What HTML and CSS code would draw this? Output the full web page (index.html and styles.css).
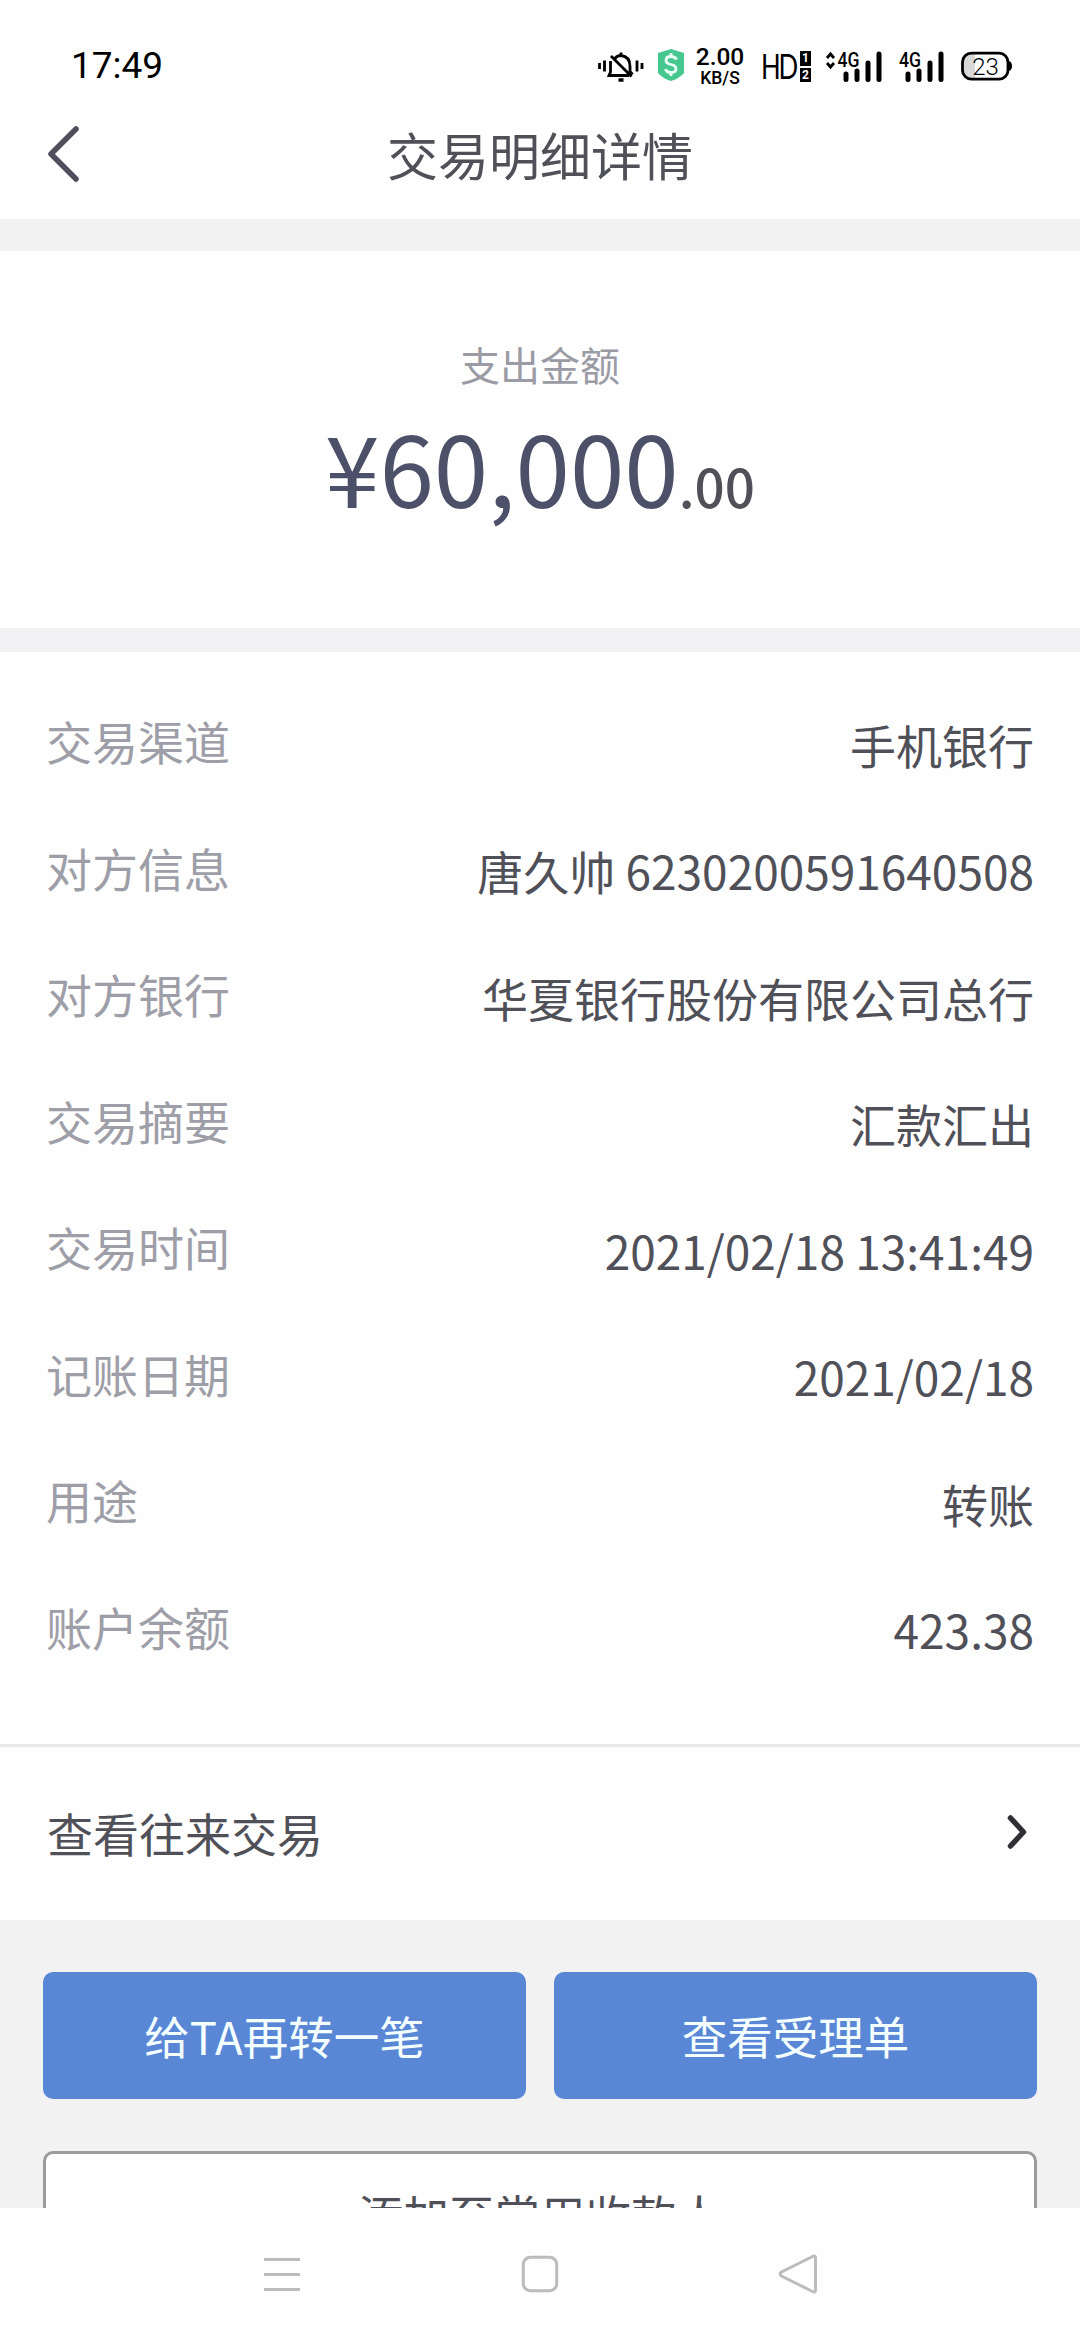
FILE: index.html
```html
<!DOCTYPE html>
<html lang="zh-CN">
<head>
    <meta charset="UTF-8">
    <meta name="viewport" content="width=device-width, initial-scale=1.0">
    <title>交易明细详情</title>
    <link rel="stylesheet" href="styles.css">
</head>
<body>
    <div class="status-bar">
        <span class="time">17:49</span>
        <div class="status-icons">
            <!-- muted bell -->
            <svg class="icon-bell" width="46" height="34" viewBox="0 0 46 34" fill="none" stroke="#000" stroke-width="2.8">
                <path d="M1.500 13v6M6.500 10.500v11M39 10.500v11M44 13v6"/>
                <path d="M17 8.500Q19 5.500 23 5.500q9 1 9 11v5l2.500 3M12.500 11v11l-1.500 3.500h20M23 2.500v3M13 6l20.500 20.500"/>
                <path d="M20.500 30h5" stroke-width="3.500"/>
            </svg>
            <svg class="icon-shield" width="26" height="34" viewBox="0 0 26 34">
                <path d="M13 1l13 4v20q-4 5-13 8Q4 30 0 25V5z" fill="#45c78f"/>
                <path d="M18.500 11.500Q17 8.500 13 8.500q-5 0-5 4 0 3 5 4t5 4.500q0 3.500-5 3.500-4.500 0-5.500-3.500M13 5v4M13 24v4" fill="none" stroke="#eafff5" stroke-width="2.800"/>
            </svg>
            <div class="speed">
                <span class="speed-value">2.00</span>
                <span class="speed-unit">KB/S</span>
            </div>
            <div class="hd">
                <span class="hd-text">HD</span>
                <div class="sims">
                    <span class="sim">1</span>
                    <span class="sim">2</span>
                </div>
            </div>
            <svg class="icon-signal" width="56" height="34" viewBox="0 0 56 34">
                <path d="M1 8l3.500-4L8 8M1 13l3.500 4L8 13" fill="none" stroke="#000" stroke-width="2.800"/>
                <text class="net" x="11.500" y="17" textLength="22" lengthAdjust="spacingAndGlyphs">4G</text>
                <path d="M20 24v5.500M31 21v8.500M42 13v16.500M53 4v25.500" stroke="#000" stroke-width="5" stroke-linecap="round"/>
            </svg>
            <svg class="icon-signal-2" width="45" height="34" viewBox="0 0 45 34">
                <text class="net" x="0" y="17" textLength="22" lengthAdjust="spacingAndGlyphs">4G</text>
                <path d="M9 24v5.500M20 21v8.500M31 13v16.500M42 4v25.500" stroke="#000" stroke-width="5" stroke-linecap="round"/>
            </svg>
            <svg class="icon-battery" width="52" height="34" viewBox="0 0 52 34">
                <path d="M14 3v26h-3q-9 0-9-9v-8q0-9 9-9z" fill="#d9d9d9"/>
                <rect x="1.500" y="3.200" width="45.500" height="26" rx="9" fill="none" stroke="#000" stroke-width="2.800"/>
                <path d="M48 11q3 1 3 5t-3 5z"/>
                <text class="level" x="24.500" y="24.500" text-anchor="middle">23</text>
            </svg>
        </div>
    </div>

    <header class="header">
        <svg class="back" width="36" height="60" viewBox="0 0 36 60">
            <path d="M29 5L4 30l25 25" fill="none" stroke="#4f4f5c" stroke-width="5.500" stroke-linecap="round" stroke-linejoin="round"/>
        </svg>
        <h1 class="title">交易明细详情</h1>
    </header>

    <main class="content">
        <section class="amount">
            <p class="amount-label">支出金额</p>
            <p class="amount-value">¥60,000<span class="cents">.00</span></p>
        </section>

        <section class="details">
            <div class="row"><span class="label">交易渠道</span><span class="value">手机银行</span></div>
            <div class="row"><span class="label">对方信息</span><span class="value">唐久帅 6230200591640508</span></div>
            <div class="row"><span class="label">对方银行</span><span class="value">华夏银行股份有限公司总行</span></div>
            <div class="row"><span class="label">交易摘要</span><span class="value">汇款汇出</span></div>
            <div class="row"><span class="label">交易时间</span><span class="value">2021/02/18 13:41:49</span></div>
            <div class="row"><span class="label">记账日期</span><span class="value">2021/02/18</span></div>
            <div class="row"><span class="label">用途</span><span class="value">转账</span></div>
            <div class="row"><span class="label">账户余额</span><span class="value">423.38</span></div>
        </section>

        <div class="history">
            <span>查看往来交易</span>
            <svg width="22" height="36" viewBox="0 0 22 36">
                <path d="M4.500 4l13 14-13 14" fill="none" stroke="#303034" stroke-width="5.500" stroke-linecap="round" stroke-linejoin="round"/>
            </svg>
        </div>

        <div class="actions">
            <div class="action-pair">
                <button class="btn btn-primary">给TA再转一笔</button>
                <button class="btn btn-primary">查看受理单</button>
            </div>
            <button class="btn btn-outline">添加至常用收款人</button>
        </div>
    </main>

    <nav class="nav-bar">
        <svg width="40" height="40" viewBox="0 0 40 40">
            <path d="M2 5.500h36M2 20.500h36M2 35.500h36"/>
        </svg>
        <svg width="40" height="40" viewBox="0 0 40 40">
            <rect x="3.300" y="3.300" width="33.400" height="33.400" rx="7"/>
        </svg>
        <svg width="40" height="40" viewBox="0 0 40 40">
            <path d="M34.500 2.500Q37.500 1 37.500 4v32q0 3-3 1.500L3.500 22q-3-2 0-4z"/>
        </svg>
    </nav>
</body>
</html>
```
FILE: styles.css
```css
* {
    box-sizing: border-box;
}
body {
    margin: 0;
    width: 1080px;
    height: 2340px;
    display: flex;
    flex-direction: column;
    overflow: hidden;
    background: #fefefe;
    color: #505059;
    font-family: "Noto Sans CJK SC", sans-serif;
    font-size: 46px;
}
p, h1 {
    margin: 0;
    font-weight: 400;
}
svg {
    display: block;
    flex: none;
    overflow: visible;
}

/* status bar */
.status-bar {
    flex: none;
    height: 110px;
    padding: 0 67px 0 71px;
    display: flex;
    align-items: flex-start;
    justify-content: space-between;
    color: #000;
    font-family: Roboto, sans-serif;
}
.time {
    margin-top: 45px;
    font-size: 37px;
    line-height: 42px;
}
.status-icons {
    display: flex;
    margin-top: 50px;
}
.icon-shield {
    margin-left: 14px;
    margin-top: -2px;
}
.speed {
    width: 54px;
    margin-left: 9px;
    margin-top: -4px;
    display: flex;
    flex-direction: column;
    align-items: center;
    font-weight: 500;
}
.speed-value {
    font-size: 24.5px;
    line-height: 22px;
}
.speed-unit {
    font-size: 17.5px;
    line-height: 21px;
}
.hd {
    width: 50px;
    margin-left: 14px;
    display: flex;
    justify-content: space-between;
}
.hd-text {
    margin-top: -3px;
    font-family: Lato, sans-serif;
    font-size: 34px;
    line-height: 38px;
    letter-spacing: -7px;
    transform: scaleX(0.76);
    transform-origin: left;
    width: 36px;
    letter-spacing: -3px;
}
.sims {
    display: flex;
    flex-direction: column;
    gap: 2px;
    margin-top: 1px;
}
.sim {
    width: 11px;
    height: 14.5px;
    background: #000;
    color: #fff;
    font-size: 12px;
    font-weight: 700;
    line-height: 15px;
    text-align: center;
}
.icon-signal {
    margin-left: 15px;
}
.icon-signal-2 {
    margin-left: 17px;
}
.icon-battery {
    margin-left: 17px;
}
.net {
    font-size: 20px;
    font-weight: 500;
}
.level {
    font-size: 24px;
    font-weight: 300;
}

/* title bar */
.header {
    flex: none;
    height: 109px;
    padding: 0 47px;
    display: grid;
    grid-template-columns: 60px 1fr 60px;
    align-items: start;
}
.back {
    margin-top: 14px;
}
.title {
    margin-top: 9px;
    font-family: KaiTi, STKaiti, "Noto Sans CJK SC", sans-serif;
    font-size: 51px;
    line-height: 70px;
    text-align: center;
}

.content {
    flex: 1;
    min-height: 0;
    overflow: hidden;
}
.amount {
    height: 433px;
    padding-top: 85px;
    border-top: 32px solid #f2f2f3;
    border-bottom: 24px solid #f1f1f3;
    text-align: center;
}
.amount-label {
    font-size: 40px;
    line-height: 56px;
    color: #9b9ba5;
}
.amount-value {
    margin-top: 8px;
    font-size: 98px;
    line-height: 130px;
    color: #4c5068;
}
.cents {
    font-size: 53px;
    font-weight: 500;
    color: #505059;
}

.details {
    height: 1095px;
    padding: 25px 46px 0;
    border-bottom: 3px solid #e8e8eb;
}
.row {
    height: 126.5px;
    display: flex;
    align-items: center;
    justify-content: space-between;
}
.label {
    color: #9e9ea8;
}
.value {
    padding-top: 7px;
}

.history {
    height: 173px;
    padding: 0 52px 4px 47px;
    display: flex;
    align-items: center;
    justify-content: space-between;
    font-family: KaiTi, STKaiti, "Noto Sans CJK SC", sans-serif;
}

.actions {
    height: 480px;
    padding: 52px 43px 0;
    background: #f2f2f3;
}
.action-pair {
    display: flex;
    gap: 28px;
}
.btn {
    flex: 1;
    height: 127px;
    padding: 0 0 2px;
    border: none;
    border-radius: 10px;
    font-family: KaiTi, STKaiti, "Noto Sans CJK SC", sans-serif;
    font-size: 45.5px;
}
.btn-primary {
    color: #f4ffff;
    background: #5987d6;
}
.btn-outline {
    display: block;
    width: 100%;
    margin-top: 52px;
    color: #505059;
    background: #fefefe;
    border: 3px solid #9b9b9d;
}

/* system navigation */
.nav-bar {
    flex: none;
    height: 132px;
    padding: 0 262px;
    display: flex;
    align-items: center;
    justify-content: space-between;
    background: #fefefe;
    fill: none;
    stroke: #bcbcbc;
    stroke-width: 3px;
}
```
